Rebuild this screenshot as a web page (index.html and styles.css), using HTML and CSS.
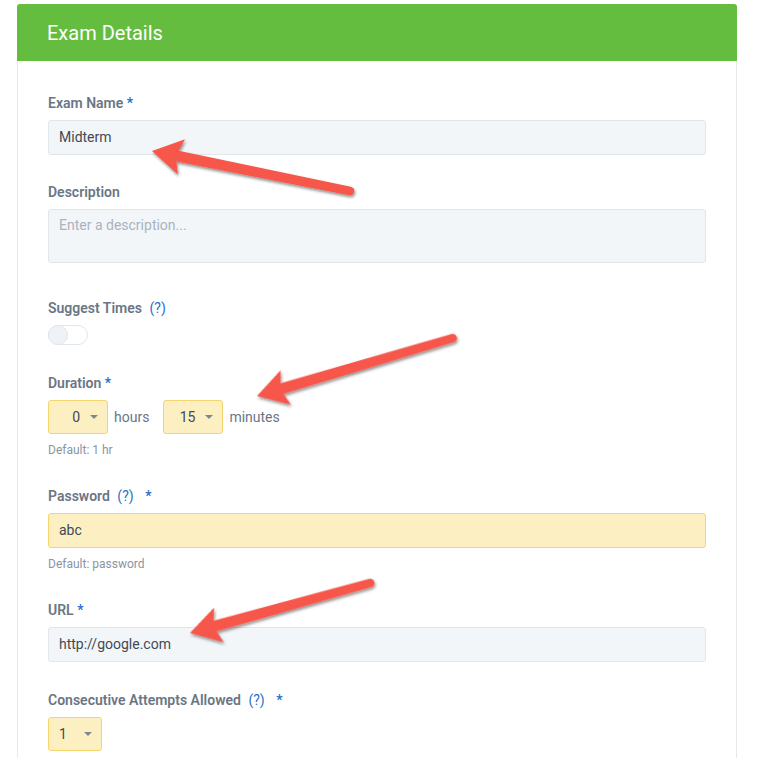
FILE: index.html
```html
<!DOCTYPE html>
<html>
<head>
<meta charset="utf-8">
<title>Exam Details</title>
<link rel="stylesheet" href="styles.css">
</head>
<body>
<div class="page">
  <div class="card">
    <div class="card-header">Exam Details</div>
    <div class="card-body">
      <div class="group group-first">
        <div class="label">Exam Name <span class="req">*</span></div>
        <div class="input">Midterm</div>
      </div>
      <div class="group group-desc">
        <div class="label">Description</div>
        <div class="input textarea placeholder">Enter a description...</div>
      </div>
      <div class="group">
        <div class="label">Suggest Times <span class="help">(?)</span></div>
        <div class="toggle"><span class="knob"></span></div>
      </div>
      <div class="group">
        <div class="label">Duration <span class="req">*</span></div>
        <div class="duration">
          <div class="select select-dur"><span class="val">0</span><span class="caret"></span></div>
          <span class="unit">hours</span>
          <div class="select select-dur select-min"><span class="val">15</span><span class="caret"></span></div>
          <span class="unit">minutes</span>
        </div>
        <div class="hint">Default: 1 hr</div>
      </div>
      <div class="group">
        <div class="label">Password <span class="help">(?)</span> <span class="req req-far">*</span></div>
        <div class="input input-warn">abc</div>
        <div class="hint">Default: password</div>
      </div>
      <div class="group">
        <div class="label">URL <span class="req">*</span></div>
        <div class="input">http://google.com</div>
      </div>
      <div class="group">
        <div class="label">Consecutive Attempts Allowed <span class="help">(?)</span> <span class="req req-far">*</span></div>
        <div class="select select-att"><span class="val">1</span><span class="caret"></span></div>
      </div>
    </div>
  </div>
  <svg class="arrows" width="759" height="758" viewBox="0 0 759 758" xmlns="http://www.w3.org/2000/svg">
    <defs>
      <filter id="sh" x="-20%" y="-50%" width="140%" height="200%">
        <feDropShadow dx="1" dy="2" stdDeviation="1.4" flood-color="#000" flood-opacity="0.45"/>
      </filter>
    </defs>
    <g filter="url(#sh)" fill="#f7574b">
      <path transform="translate(152 151) rotate(11.42)" d="M0,0 L30,-18 L26,-5.5 L202,-4.3 A4.3,4.3 0 0 1 202,4.3 L26,5.5 L30,18 Z"/>
      <path transform="translate(257 396) rotate(-16.48)" d="M0,0 L30,-18 L26,-5.5 L204,-4.3 A4.3,4.3 0 0 1 204,4.3 L26,5.5 L30,18 Z"/>
      <path transform="translate(190 633) rotate(-15.52)" d="M0,0 L30,-18 L26,-5.5 L187,-4.3 A4.3,4.3 0 0 1 187,4.3 L26,5.5 L30,18 Z"/>
    </g>
  </svg>
</div>
</body>
</html>
```

FILE: styles.css
```css
html, body {
  margin: 0;
  padding: 0;
  background: #ffffff;
}

body {
  font-family: Roboto, "Liberation Sans", Arial, sans-serif;
  color: #3f4a56;
}

.page {
  position: relative;
  width: 759px;
  min-height: 758px;
  overflow: hidden;
}

.card {
  margin: 4px 0 0 17px;
  width: 720px;
  box-sizing: border-box;
  border: 1px solid #e4e9ee;
  border-top: none;
  border-radius: 3px 3px 0 0;
  background: #fff;
}

.card-header {
  background: #64bd3f;
  color: #ffffff;
  font-size: 20px;
  height: 57px;
  box-sizing: border-box;
  padding-top: 2px;
  line-height: 55px;
  padding-left: 30px;
  margin: 0 -1px;
  border-radius: 3px 3px 0 0;
}

.card-body {
  padding: 32px 30px 10px 30px;
}

.group {
  margin-bottom: 28px;
}

.group-first {
  margin-bottom: 27px;
}

.group-desc {
  margin-bottom: 35px;
}

.label {
  font-size: 14px;
  font-weight: 600;
  line-height: 20px;
  color: #6a7684;
  margin-bottom: 7px;
}

.req {
  color: #1f6fd1;
  font-weight: 600;
}

.req-far {
  margin-left: 8px;
}

.help {
  color: #2a6fc9;
  font-weight: 400;
  margin-left: 4px;
}

.input {
  height: 35px;
  box-sizing: border-box;
  border: 1px solid #e1e6eb;
  background: #f3f6f9;
  border-radius: 3px;
  padding: 0 10px;
  font-size: 14px;
  line-height: 33px;
  color: #3f4a56;
}

.textarea {
  height: 54px;
  line-height: 30px;
}

.placeholder {
  color: #aab3bd;
}

.input-warn {
  background: #fcf0c2;
  border-color: #f5d56b;
}

.toggle {
  width: 40px;
  height: 20px;
  box-sizing: border-box;
  border: 1px solid #e1e6eb;
  border-radius: 10px;
  background: #fff;
  position: relative;
}

.knob {
  position: absolute;
  left: -1px;
  top: -1px;
  width: 20px;
  height: 20px;
  box-sizing: border-box;
  border-radius: 50%;
  border: 1px solid #e1e6eb;
  background: #eff3f7;
}

.duration {
  display: flex;
  align-items: center;
}

.select {
  height: 34px;
  box-sizing: border-box;
  border: 1px solid #f5d56b;
  background: #fcf0c2;
  border-radius: 3px;
  display: flex;
  align-items: center;
  font-size: 14px;
  color: #3f4a56;
}

.select-dur {
  width: 60px;
}

.select-dur .val {
  width: 31px;
  text-align: right;
}

.select-dur .caret {
  margin-left: 10px;
}

.select-att {
  width: 54px;
  padding-left: 10px;
}

.select-att .val {
  width: 25px;
}

.caret {
  width: 0;
  height: 0;
  border-left: 4px solid transparent;
  border-right: 4px solid transparent;
  border-top: 4px solid #80868e;
}

.unit {
  font-size: 14px;
  color: #6a7684;
  margin: 0 14px 0 6px;
}

.hint {
  font-size: 12px;
  line-height: 16px;
  color: #8a95a1;
  margin-top: 8px;
}

.arrows {
  position: absolute;
  left: 0;
  top: 0;
  pointer-events: none;
}
```
